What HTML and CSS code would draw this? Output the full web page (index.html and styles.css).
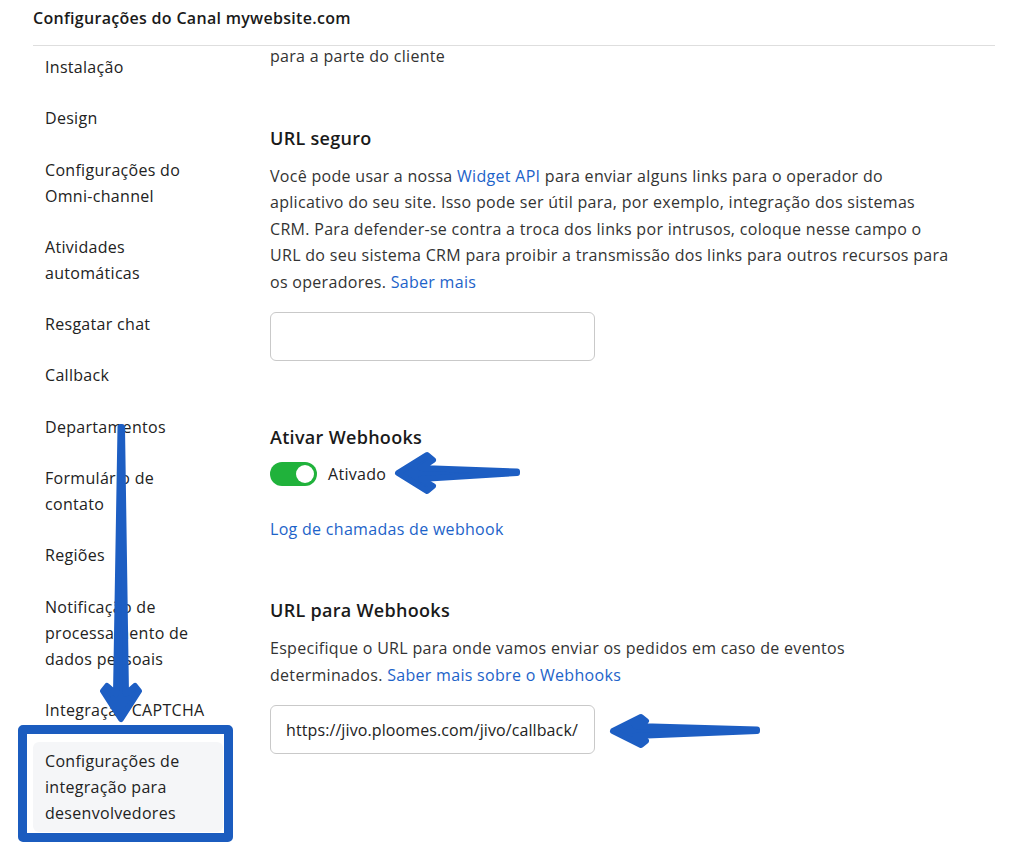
FILE: index.html
```html
<!DOCTYPE html>
<html lang="pt">
<head>
    <meta charset="UTF-8">
    <meta name="viewport" content="width=device-width, initial-scale=1.0">
    <title>Configurações do Canal</title>
    <link rel="stylesheet" href="styles.css">
</head>

<body>
    <div class="page">
        <div class="top">
            <h2>Configurações do Canal mywebsite.com</h2>
        </div>

        <div class="layout">
            <ul class="sidebar">
                <li>Instalação</li>
                <li>Design</li>
                <li>Configurações do Omni-channel</li>
                <li>Atividades automáticas</li>
                <li>Resgatar chat</li>
                <li>Callback</li>
                <li>Departamentos</li>
                <li>Formulário de contato</li>
                <li>Regiões</li>
                <li>Notificação de processamento de dados pessoais</li>
                <li>Integração CAPTCHA</li>
                <li class="active">Configurações de integração para desenvolvedores</li>
            </ul>

            <div class="main">
                <p class="cut">para a parte do cliente</p>

                <div class="section">
                    <h3>URL seguro</h3>
                    <p>Você pode usar a nossa <a href="#">Widget API</a> para enviar alguns links para o operador do aplicativo do seu site. Isso pode ser útil para, por exemplo, integração dos sistemas CRM. Para defender-se contra a troca dos links por intrusos, coloque nesse campo o<br>URL do seu sistema CRM para proibir a transmissão dos links para outros recursos para os operadores. <a href="#">Saber mais</a></p>
                    <input type="text" class="input-box">
                </div>

                <div class="section webhooks">
                    <h3>Ativar Webhooks</h3>
                    <div class="switch-row">
                        <span class="toggle"></span>
                        <span>Ativado</span>
                    </div>
                    <a href="#" class="log-link">Log de chamadas de webhook</a>
                </div>

                <div class="section">
                    <h3>URL para Webhooks</h3>
                    <p>Especifique o URL para onde vamos enviar os pedidos em caso de eventos determinados. <a href="#">Saber mais sobre o Webhooks</a></p>
                    <input type="text" class="input-box" value="https://jivo.ploomes.com/jivo/callback/">
                </div>
            </div>
        </div>
    </div>

    <!-- annotations -->
    <div class="mark-box"></div>
    <svg class="arrows" width="1011" height="848" viewBox="0 0 1011 848">
        <g fill="#1d5ec3" stroke="#1d5ec3" stroke-width="6" stroke-linejoin="round">
            <polygon points="121,719 103,691 107,686 116,694 120.5,427 122,427 126,694 135,686 139,691"/>
            <polygon points="398,473 427,455 433,460 421,468 517,471.5 517,473 421,479 433,486 427,491"/>
            <polygon points="613,731 641,717 646,721 635,726 757,729.5 757,731 635,736 646,741 641,745"/>
        </g>
    </svg>
</body>
</html>
```

FILE: styles.css
```css
body {
    margin: 0;
    overflow: hidden;
    background: #fff;
    font-family: "Segoe UI", "Open Sans", sans-serif;
    font-size: 16px;
    letter-spacing: 0.3px;
    color: #222;
}

.page {
    padding: 0 16px 0 33px;
}

.top {
    padding: 6px 0 15px;
    border-bottom: 1px solid #dedede;
}

.top h2 {
    margin: 0;
    font-size: 16px;
    line-height: 24px;
    font-weight: 600;
    color: #1a1a1a;
}

.layout {
    display: flex;
}

.sidebar {
    list-style: none;
    margin: 0;
    padding: 2px 0 0;
    width: 190px;
    flex-shrink: 0;
}

.sidebar li {
    padding: 6px 12px;
    margin-bottom: 13.3px;
    line-height: 26px;
    border-radius: 6px;
}

.sidebar li.active {
    background-color: #f5f6f8;
}

.main {
    margin-left: 47px;
    width: 680px;
    color: #333;
}

.main p {
    margin: 0 0 17px;
    line-height: 26.5px;
}

.main p.cut {
    margin: -3px 0 0;
}

.main a {
    color: #1d63c9;
    text-decoration: none;
}

.section {
    margin-top: 56px;
}

.section h3 {
    margin: 0 0 13px;
    font-size: 18px;
    line-height: 24px;
    font-weight: 600;
    color: #1a1a1a;
}

.webhooks {
    margin-top: 64px;
}

.webhooks h3 {
    margin-bottom: 12px;
}

.input-box {
    box-sizing: border-box;
    width: 325px;
    height: 49px;
    padding: 0 6px 0 15px;
    border: 1px solid #c9c9c9;
    border-radius: 6px;
    font-family: inherit;
    font-size: 16px;
    letter-spacing: 0.1px;
    color: #222;
}

.switch-row {
    display: flex;
    align-items: center;
    gap: 11px;
    height: 26px;
    color: #222;
}

.toggle {
    position: relative;
    width: 47px;
    height: 24px;
    border-radius: 12px;
    background-color: #20b23b;
}

.toggle::after {
    content: "";
    position: absolute;
    top: 3px;
    right: 3px;
    width: 18px;
    height: 18px;
    border-radius: 50%;
    background: #fff;
}

.log-link {
    display: block;
    margin-top: 29px;
    line-height: 26px;
}

.mark-box {
    position: absolute;
    left: 18px;
    top: 725px;
    width: 197px;
    height: 99px;
    border: 9px solid #1b5cbf;
    border-radius: 5px;
}

.arrows {
    position: absolute;
    left: 0;
    top: 0;
    pointer-events: none;
}
```
